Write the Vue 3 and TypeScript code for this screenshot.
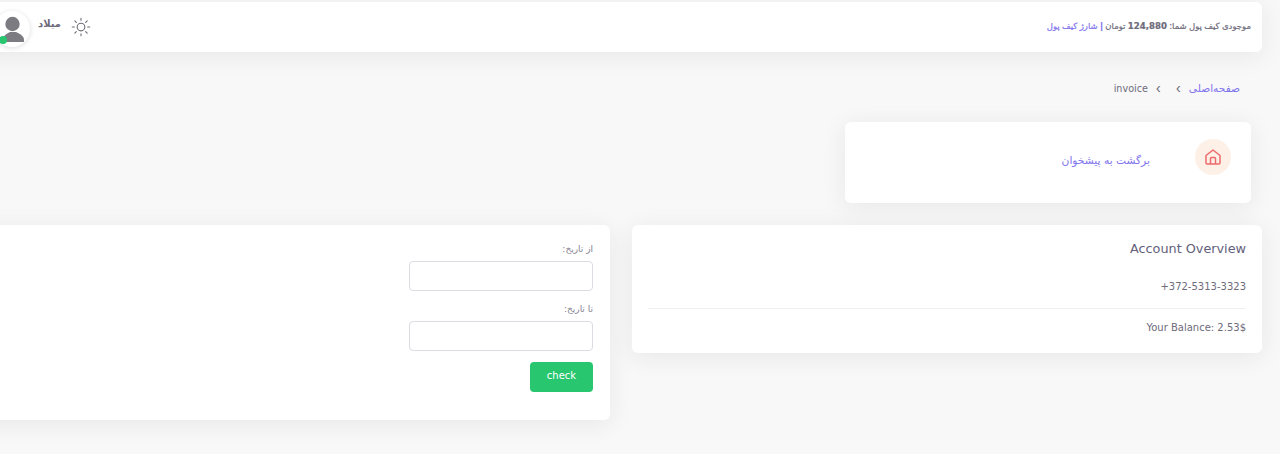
<template>
  <div class="page" dir="rtl">
    <header class="topbar">
      <div class="wallet">
        موجودی کیف پول شما: <b class="amount">124,880</b> تومان
        <b class="sep">|</b> <a class="link">شارژ کیف پول</a>
      </div>
      <div class="user">
        <svg class="sun" viewBox="0 0 24 24" width="20" height="20" fill="none" stroke="#6b6b76" stroke-width="1.3" stroke-linecap="round">
          <circle cx="12" cy="12" r="4.6" />
          <path d="M12 1.5v2.5M12 20v2.5M1.5 12H4M20 12h2.5M4.6 4.6l1.8 1.8M17.6 17.6l1.8 1.8M4.6 19.4l1.8-1.8M17.6 6.4l1.8-1.8" />
        </svg>
        <span class="name">میلاد</span>
        <div class="avatar">
          <svg viewBox="0 0 36 36" width="36" height="36" fill="#7b7b81">
            <circle cx="18.5" cy="13" r="7.2" />
            <path d="M9 31v-2c0-4 3-6 7-8h6c4 2 8 4 8 8v2z" />
          </svg>
          <i class="online"></i>
        </div>
      </div>
    </header>

    <nav class="crumbs">
      <a class="link">صفحه‌اصلی</a>
      <span class="chev">›</span>
      <span class="chev">›</span>
      <span class="current">invoice</span>
    </nav>

    <section class="card back">
      <div class="home">
        <svg viewBox="0 0 18 18" width="18" height="18" fill="none" stroke="#ec6a6b" stroke-width="1.5" stroke-linejoin="round">
          <path d="M2 7.5 9 2l7 5.5V15a1 1 0 0 1-1 1H3a1 1 0 0 1-1-1z" />
          <path d="M6.5 16v-5.500a1 1 0 0 1 1-1h3a1 1 0 0 1 1 1V16" />
        </svg>
      </div>
      <a class="link back-text">برگشت به پیشخوان</a>
    </section>

    <div class="row">
      <section class="card overview">
        <h2 dir="ltr">Account Overview</h2>
        <p class="phone" dir="ltr">+372-5313-3323</p>
        <p class="balance" dir="ltr">Your Balance: 2.53$</p>
      </section>

      <section class="card filter">
        <form class="form" @submit.prevent>
          <label>از تاریخ:</label>
          <input v-model="from" type="text" />
          <label class="second">تا تاریخ:</label>
          <input v-model="to" type="text" />
          <button type="submit">check</button>
        </form>
      </section>
    </div>
  </div>
</template>

<script setup lang="ts">
import { ref } from 'vue'

const from = ref('')
const to = ref('')
</script>

<style>
html,
body {
  margin: 0;
  overflow: hidden;
}
</style>

<style scoped>
.page {
  width: 1280px;
  height: 454px;
  overflow: hidden;
  background: #f8f8f8;
  padding: 2px 18px 0 0;
  box-sizing: border-box;
  font-family: "DejaVu Sans", "Noto Sans", sans-serif;
  color: #6e6b7b;
}

.link {
  color: #7f74ee;
}

.topbar {
  width: 1290px;
  height: 50px;
  display: flex;
  justify-content: space-between;
  align-items: center;
  background: #fff;
  border-radius: 6px;
  box-shadow: 0 4px 24px rgba(34, 41, 47, 0.08);
  padding: 0 11px 0 0;
  box-sizing: border-box;
}

.wallet {
  font-size: 8.5px;
  margin-top: -2px;
  white-space: nowrap;
  word-spacing: -0.4px;
  -webkit-text-stroke: 0.2px currentColor;
}

.amount {
  font-family: "DejaVu Sans", sans-serif;
  font-size: 8.6px;
  font-weight: 700;
}

.sep {
  color: #7367f0;
}

.user {
  display: flex;
  align-items: center;
  margin-left: 22px;
}

.sun {
  margin-left: 10px;
}

.name {
  font-size: 10px;
  font-weight: 700;
  margin-left: 8px;
  margin-top: -7px;
}

.avatar {
  position: relative;
  width: 36px;
  height: 36px;
  margin-top: 3px;
  border-radius: 50%;
  background: #fff;
  box-shadow: 0 1px 5px rgba(34, 41, 47, 0.16);
}

.avatar svg {
  display: block;
}

.online {
  position: absolute;
  left: 5px;
  bottom: 3px;
  width: 8px;
  height: 8px;
  border-radius: 50%;
  background: #28c76f;
}

.crumbs {
  display: flex;
  align-items: center;
  padding: 28px 22px 0 0;
  height: 16px;
  font-size: 10.6px;
}

.current {
  font-family: "DejaVu Sans", sans-serif;
  font-size: 9.6px;
  margin-right: 8px;
}

.chev {
  font-family: "Inter", sans-serif;
  font-size: 13px;
  margin-right: 8px;
}

.chev + .chev {
  margin-right: 15px;
}

.card {
  background: #fff;
  border-radius: 6px;
  box-shadow: 0 4px 24px rgba(34, 41, 47, 0.08);
  box-sizing: border-box;
}

.back {
  width: 406px;
  height: 81px;
  margin: 26px 11px 22px 0;
  display: flex;
  align-items: center;
  padding-right: 20px;
}

.home {
  width: 36px;
  height: 36px;
  margin-top: -11px;
  border-radius: 50%;
  background: #fdf0e6;
  display: flex;
  align-items: center;
  justify-content: center;
}

.back-text {
  font-size: 10.7px;
  margin-right: 45px;
  margin-top: -5px;
}

.row {
  display: flex;
  align-items: flex-start;
  gap: 22px;
}

.overview {
  width: 630px;
  height: 128px;
  padding: 14px 16px 0;
  flex-shrink: 0;
}

.overview h2 {
  margin: 0;
  font-family: "DejaVu Sans", sans-serif;
  font-size: 12.8px;
  font-weight: 400;
  line-height: 20px;
  color: #62607a;
  text-align: right;
}

.overview p {
  margin: 0;
  font-family: "DejaVu Sans", sans-serif;
  font-size: 10px;
  text-align: right;
}

.phone {
  padding: 21px 0 14px;
  border-bottom: 1px solid #efeef3;
  line-height: 14px;
}

.balance {
  padding-top: 12px;
  line-height: 14px;
}

.filter {
  width: 640px;
  height: 195px;
  flex-shrink: 0;
  padding: 17px 17px 0;
}

.form {
  width: 184px;
  display: flex;
  flex-direction: column;
}

.form label {
  font-size: 9px;
  line-height: 14px;
  margin-bottom: 5px;
  color: #85828f;
}

.form .second {
  margin-top: 11px;
}

.form input {
  height: 30px;
  box-sizing: border-box;
  border: 1px solid #dcdbe2;
  border-radius: 4px;
  background: #fff;
  outline: none;
}

.form button {
  align-self: flex-start;
  margin-top: 11px;
  width: 63px;
  height: 30px;
  border: none;
  border-radius: 4px;
  background: #28c76f;
  color: #fff;
  font-family: "DejaVu Sans", sans-serif;
  font-size: 10px;
  padding: 0 0 3px;
}
</style>
